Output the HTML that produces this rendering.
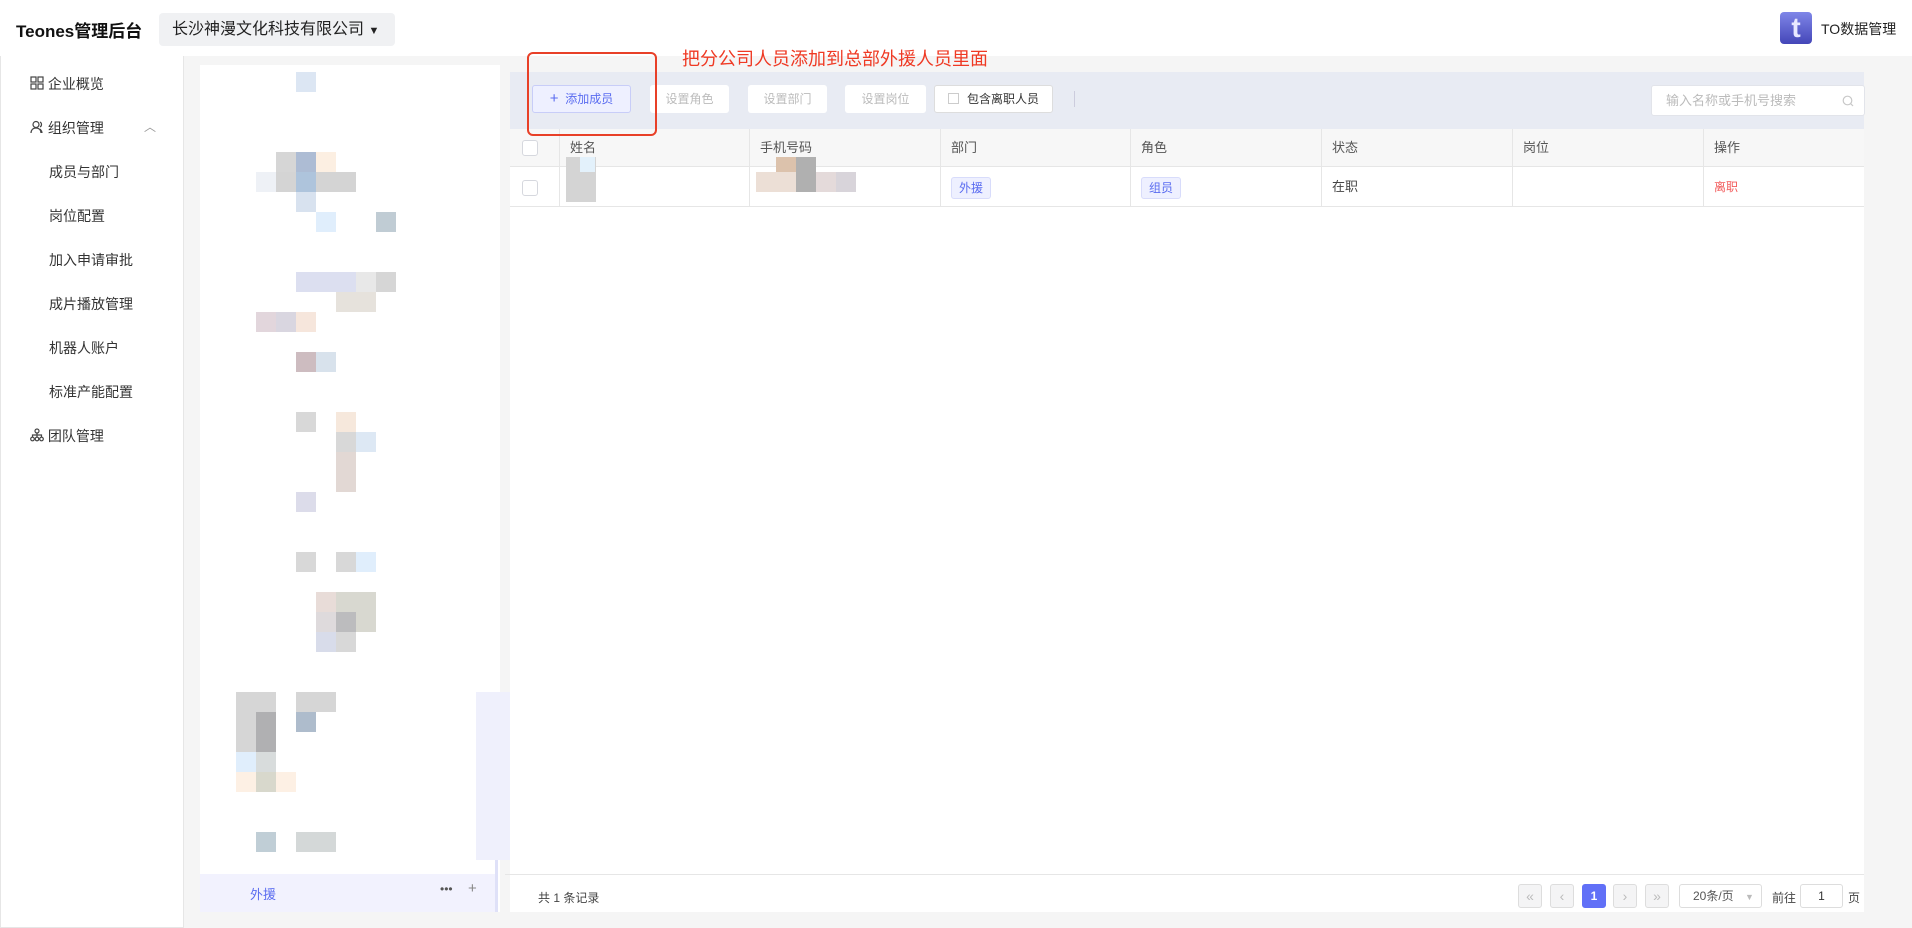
<!DOCTYPE html>
<html><head><meta charset="utf-8"><style>
*{box-sizing:border-box;margin:0;padding:0}
body{width:1912px;height:928px;background:#f5f5f5;font-family:"Liberation Sans","Noto Sans CJK SC",sans-serif;position:relative;overflow:hidden;color:#333}
.abs{position:absolute}
.hdr{left:0;top:0;width:1912px;height:56px;background:#fff}
.side{left:0;top:56px;width:184px;height:872px;background:#fff;border:1px solid #e6e6e6;border-top:none}
.mi{position:absolute;font-size:14px;color:#333}
.tree{left:200px;top:65px;width:300px;height:847px;background:#fff}
.panel{left:510px;top:72px;width:1354px;height:840px;background:#fff}
.tb{left:510px;top:72px;width:1354px;height:57px;background:#e8ebf3}
.btn{position:absolute;top:85px;height:28px;background:#fff;border-radius:3px;font-size:12px;color:#bbb;text-align:center;line-height:28px}
.th{position:absolute;top:129px;height:38px;background:#f7f7f7;font-size:13px;color:#555;line-height:38px;padding-left:10px;border-right:1px solid #e6e6e6;border-bottom:1px solid #e6e6e6}
.td{position:absolute;top:167px;height:40px;font-size:13px;color:#444;line-height:40px;padding-left:10px;border-right:1px solid #e6e6e6;border-bottom:1px solid #e6e6e6}
.cb{position:absolute;width:16px;height:16px;border:1px solid #d6d8de;border-radius:3px;background:#fff}
.tag{display:inline-block;height:22px;line-height:20px;padding:0 7px;border:1px solid #d8dcfb;background:#eef0ff;color:#5a6cf0;font-size:12px;border-radius:3px;vertical-align:middle}
.pg{position:absolute;top:884px;height:24px;width:24px;border:1px solid #ddd;background:#f4f4f5;border-radius:3px;color:#bbb;font-size:14px;text-align:center;line-height:22px}
.px{position:absolute;width:20px;height:20px}
</style></head><body>
<div class="abs hdr"></div>
<div class="abs" style="left:16px;top:17px;font-size:17px;font-weight:bold;color:#111;white-space:nowrap">Teones管理后台</div>
<div class="abs" style="left:159px;top:13px;width:236px;height:33px;background:#f0f1f3;border-radius:4px;font-size:16px;color:#222;line-height:33px;padding-left:13px;white-space:nowrap">长沙神漫文化科技有限公司 <span style="font-size:11px">▼</span></div>
<div class="abs" style="left:1780px;top:12px;width:32px;height:32px;border-radius:4px;background:linear-gradient(#7f86e8,#4446b8);color:#e8e8ff;font-weight:bold;font-size:28px;text-align:center;line-height:32px">t</div>
<div class="abs" style="left:1821px;top:19px;font-size:14px;color:#222">TO数据管理</div>

<div class="abs side"></div>
<div class="mi" style="left:30px;top:74px"><svg width="14" height="14" viewBox="0 0 14 14" style="vertical-align:-1px" fill="none" stroke="#444" stroke-width="1.2"><rect x="1" y="1" width="5" height="5"/><rect x="8" y="1" width="5" height="5"/><rect x="1" y="8" width="5" height="5"/><rect x="8" y="8" width="5" height="5"/></svg> 企业概览</div>
<div class="mi" style="left:30px;top:118px"><svg width="14" height="14" viewBox="0 0 14 14" style="vertical-align:-1px" fill="none" stroke="#444" stroke-width="1.2"><circle cx="6" cy="4.5" r="3"/><path d="M1 13c0-3 2-5 5-5s5 2 5 5M10 2c2 1 2 4 0 5M12 13c0-2-1-3-2-4"/></svg> 组织管理</div>
<div class="abs" style="left:144px;top:118px;font-size:12px;color:#999">︿</div>
<div class="mi" style="left:49px;top:162px">成员与部门</div>
<div class="mi" style="left:49px;top:206px">岗位配置</div>
<div class="mi" style="left:49px;top:250px">加入申请审批</div>
<div class="mi" style="left:49px;top:294px">成片播放管理</div>
<div class="mi" style="left:49px;top:338px">机器人账户</div>
<div class="mi" style="left:49px;top:382px">标准产能配置</div>
<div class="mi" style="left:30px;top:426px"><svg width="14" height="14" viewBox="0 0 14 14" style="vertical-align:-1px" fill="none" stroke="#444" stroke-width="1.2"><circle cx="7" cy="3" r="2"/><circle cx="2.5" cy="11" r="1.8"/><circle cx="7" cy="11" r="1.8"/><circle cx="11.5" cy="11" r="1.8"/><path d="M7 5v4M2.5 9V7h9v2"/></svg> 团队管理</div>

<div class="abs tree"></div>
<div class="abs" style="left:476px;top:692px;width:34px;height:168px;background:#eff0fc"></div>
<div class="abs" style="left:495px;top:860px;width:3px;height:52px;background:#dfe1f8"></div>
<div class="abs" style="left:200px;top:874px;width:295px;height:38px;background:#f2f2fe"></div>
<div class="abs" style="left:250px;top:884px;font-size:13px;color:#5a6cf0">外援</div>
<div class="abs" style="left:440px;top:882px;font-size:12px;color:#555">•••</div>
<div class="abs" style="left:468px;top:880px;font-size:15px;color:#888">+</div>
<!-- mosaic -->
<div class="px" style="left:296px;top:72px;background:#dce6f3"></div>
<div class="px" style="left:276px;top:152px;background:#d6d6d6"></div>
<div class="px" style="left:296px;top:152px;background:#adbcd4"></div>
<div class="px" style="left:316px;top:152px;background:#fcefe2"></div>
<div class="px" style="left:276px;top:172px;width:80px;background:#d4d4d4"></div>
<div class="px" style="left:296px;top:172px;background:#aec4dc"></div>
<div class="px" style="left:256px;top:172px;background:#eef1f6"></div>
<div class="px" style="left:296px;top:192px;background:#d8e2ef"></div>
<div class="px" style="left:316px;top:212px;background:#e0eefc"></div>
<div class="px" style="left:376px;top:212px;background:#c0ccd4"></div>
<div class="px" style="left:296px;top:272px;width:60px;background:#dcdff0"></div>
<div class="px" style="left:356px;top:272px;background:#e8e8e8"></div>
<div class="px" style="left:376px;top:272px;background:#d6d6d6"></div>
<div class="px" style="left:256px;top:312px;background:#e2d6dc"></div>
<div class="px" style="left:276px;top:312px;background:#d9d6e0"></div>
<div class="px" style="left:296px;top:312px;background:#f6e6dc"></div>
<div class="px" style="left:336px;top:292px;width:40px;background:#e6e2dc"></div>
<div class="px" style="left:296px;top:352px;background:#cdbcc0"></div>
<div class="px" style="left:316px;top:352px;background:#d8e2ec"></div>
<div class="px" style="left:296px;top:412px;background:#d8d8d8"></div>
<div class="px" style="left:336px;top:412px;background:#f6e8dc"></div>
<div class="px" style="left:336px;top:432px;background:#d8d8d8"></div>
<div class="px" style="left:356px;top:432px;background:#dde8f4"></div>
<div class="px" style="left:336px;top:452px;height:40px;background:#e2d8d4"></div>
<div class="px" style="left:296px;top:492px;background:#dcdcea"></div>
<div class="px" style="left:296px;top:552px;background:#d8d8d8"></div>
<div class="px" style="left:336px;top:552px;background:#d8d8d8"></div>
<div class="px" style="left:356px;top:552px;background:#e0eefc"></div>
<div class="px" style="left:316px;top:592px;background:#e8dcd8"></div>
<div class="px" style="left:336px;top:592px;width:40px;height:40px;background:#d8d8d0"></div>
<div class="px" style="left:336px;top:612px;background:#bcbcbe"></div>
<div class="px" style="left:316px;top:612px;background:#dedadc"></div>
<div class="px" style="left:316px;top:632px;background:#d8dcea"></div>
<div class="px" style="left:336px;top:632px;background:#d8d8d8"></div>
<div class="px" style="left:236px;top:692px;width:40px;height:60px;background:#d6d6d6"></div>
<div class="px" style="left:296px;top:692px;width:40px;background:#d6d6d6"></div>
<div class="px" style="left:256px;top:712px;height:40px;background:#b0b0b2"></div>
<div class="px" style="left:296px;top:712px;background:#aebccc"></div>
<div class="px" style="left:236px;top:752px;background:#e0eefc"></div>
<div class="px" style="left:256px;top:752px;background:#d8dcdc"></div>
<div class="px" style="left:236px;top:772px;background:#fdf0e4"></div>
<div class="px" style="left:256px;top:772px;background:#d8d8cc"></div>
<div class="px" style="left:276px;top:772px;background:#fdf0e4"></div>
<div class="px" style="left:256px;top:832px;background:#c0ced6"></div>
<div class="px" style="left:296px;top:832px;width:40px;background:#d4d8d8"></div>

<div class="abs panel"></div>
<div class="abs tb"></div>
<div class="btn" style="left:532px;width:99px;background:#eef0ff;border:1px solid #c8cdf8;color:#5a6cf0;line-height:26px"><span style="font-size:15px">+</span>&nbsp; 添加成员</div>
<div class="btn" style="left:650px;width:79px">设置角色</div>
<div class="btn" style="left:748px;width:79px">设置部门</div>
<div class="btn" style="left:845px;width:81px">设置岗位</div>
<div class="btn" style="left:934px;width:119px;color:#333;border:1px solid #ddd;line-height:26px"><span style="display:inline-block;width:11px;height:11px;border:1px solid #ccc;vertical-align:-1px;margin-right:8px"></span>包含离职人员</div>
<div class="abs" style="left:1074px;top:91px;width:1px;height:16px;background:#ccd"></div>
<div class="abs" style="left:1651px;top:85px;width:214px;height:31px;background:#fff;border:1px solid #e2e4ea;border-radius:3px;font-size:13px;color:#bbb;line-height:29px;padding-left:14px">输入名称或手机号搜索<svg style="position:absolute;right:10px;top:9px" width="12" height="12" viewBox="0 0 12 12" fill="none" stroke="#c8c8c8" stroke-width="1.2"><circle cx="5.5" cy="5.5" r="4.3"/><path d="M8.7 8.7L11 11"/></svg></div>

<div class="th" style="left:510px;width:50px;padding:0"></div>
<div class="cb" style="left:522px;top:140px"></div>
<div class="th" style="left:560px;width:190px">姓名</div>
<div class="th" style="left:750px;width:191px">手机号码</div>
<div class="th" style="left:941px;width:190px">部门</div>
<div class="th" style="left:1131px;width:191px">角色</div>
<div class="th" style="left:1322px;width:191px">状态</div>
<div class="th" style="left:1513px;width:191px">岗位</div>
<div class="th" style="left:1704px;width:160px;border-right:none">操作</div>

<div class="td" style="left:510px;width:50px;padding:0"></div>
<div class="cb" style="left:522px;top:180px"></div>
<div class="td" style="left:560px;width:190px"></div>
<div class="td" style="left:750px;width:191px"></div>
<div class="td" style="left:941px;width:190px"><span class="tag">外援</span></div>
<div class="td" style="left:1131px;width:191px"><span class="tag">组员</span></div>
<div class="td" style="left:1322px;width:191px">在职</div>
<div class="td" style="left:1513px;width:191px"></div>
<div class="td" style="left:1704px;width:160px;border-right:none;color:#f25b5b;font-size:12px">离职</div>
<div class="abs" style="left:566px;top:157px;width:30px;height:45px;background:#d4d4d4"></div>
<div class="abs" style="left:580px;top:157px;width:15px;height:15px;background:#e3f1fb"></div>
<div class="abs" style="left:756px;top:172px;width:100px;height:20px;background:#ecdfd6"></div>
<div class="abs" style="left:776px;top:157px;width:20px;height:15px;background:#dcc2ac"></div>
<div class="abs" style="left:796px;top:157px;width:20px;height:35px;background:#b0b0b0"></div>
<div class="abs" style="left:816px;top:172px;width:40px;height:20px;background:#e4dada"></div>
<div class="abs" style="left:836px;top:172px;width:20px;height:20px;background:#d8d4da"></div>

<div class="abs" style="left:505px;top:874px;width:1359px;height:1px;background:#e6e6e6"></div>
<div class="abs" style="left:538px;top:889px;font-size:12px;color:#444">共 1 条记录</div>
<div class="pg" style="left:1518px">«</div>
<div class="pg" style="left:1550px">‹</div>
<div class="pg" style="left:1582px;background:#6170f7;border-color:#6170f7;color:#fff;font-size:12px;font-weight:bold">1</div>
<div class="pg" style="left:1613px">›</div>
<div class="pg" style="left:1645px">»</div>
<div class="abs" style="left:1679px;top:884px;width:83px;height:24px;border:1px solid #ddd;border-radius:3px;font-size:12px;color:#555;line-height:22px;padding-left:13px">20条/页 <span style="color:#bbb;font-size:9px;margin-left:8px">▼</span></div>
<div class="abs" style="left:1772px;top:889px;font-size:12px;color:#444">前往</div>
<div class="abs" style="left:1800px;top:884px;width:43px;height:24px;border:1px solid #ddd;border-radius:3px;font-size:12px;text-align:center;line-height:22px">1</div>
<div class="abs" style="left:1848px;top:889px;font-size:12px;color:#444">页</div>

<div class="abs" style="left:527px;top:52px;width:130px;height:84px;border:2.5px solid #e84028;border-radius:6px"></div>
<div class="abs" style="left:682px;top:45px;font-size:18px;color:#ef3a24">把分公司人员添加到总部外援人员里面</div>
</body></html>
